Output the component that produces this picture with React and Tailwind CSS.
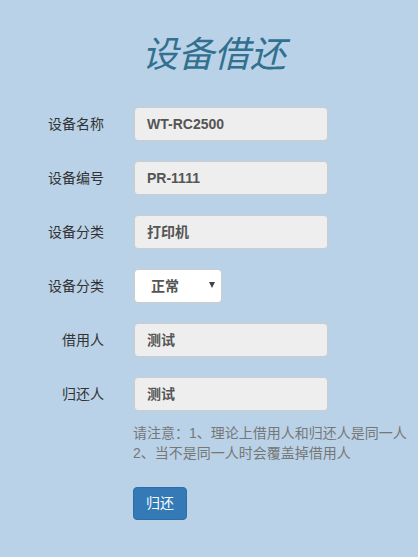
import React from "react";

const fields = [
  { label: "设备名称", value: "WT-RC2500" },
  { label: "设备编号", value: "PR-1111" },
  { label: "设备分类", value: "打印机" },
];

const people = [
  { label: "借用人", value: "测试" },
  { label: "归还人", value: "测试" },
];

const cjk = "font-['Liberation_Sans','Noto_Sans_CJK_SC',sans-serif]";

const Row = ({ label, children }) => (
  <div className="flex items-center h-[34px]">
    <label className="w-[104px] text-right text-[14px] text-[#333]">{label}</label>
    <div className="ml-[30px]">{children}</div>
  </div>
);

const ReadInput = ({ value }) => (
  <div className="w-[194px] h-[34px] flex items-center px-[12px] bg-[#eeeeee] border border-[#cccccc] rounded-[4px] text-[14px] font-bold text-[#555]">
    {value}
  </div>
);

export default function App() {
  return (
    <div className={`min-h-[557px] w-full bg-[#b9d2e8] ${cjk}`}>
      <div className="pt-[35px] pl-[10px] text-center">
        <h1 className="text-[36px] leading-[40px] italic text-[#31708f]">设备借还</h1>
      </div>

      <div className="mt-[32px] flex flex-col gap-[20px]">
        {fields.map((f) => (
          <Row key={f.value} label={f.label}>
            <ReadInput value={f.value} />
          </Row>
        ))}

        <Row label="设备分类">
          <div className="relative w-[88px] h-[34px] flex items-center pl-[16px] bg-white border border-[#cccccc] rounded-[4px] text-[14px] font-bold text-[#555]">
            正常
            <span className="absolute right-[6px] top-[12px] w-0 h-0 border-l-[3px] border-r-[3px] border-t-[6px] border-l-transparent border-r-transparent border-t-[#444]" />
          </div>
        </Row>

        {people.map((p) => (
          <Row key={p.label} label={p.label}>
            <ReadInput value={p.value} />
          </Row>
        ))}
      </div>

      <div className="ml-[133px] mt-[12px] text-[14px] leading-[20px] text-[#777]">
        请注意：1、理论上借用人和归还人是同一人
        <br />
        2、当不是同一人时会覆盖掉借用人
      </div>

      <div className="ml-[133px] mt-[24px]">
        <button className="w-[54px] h-[33px] bg-[#337ab7] border border-[#2e6da4] rounded-[4px] text-white text-[14px]">
          归还
        </button>
      </div>
    </div>
  );
}
